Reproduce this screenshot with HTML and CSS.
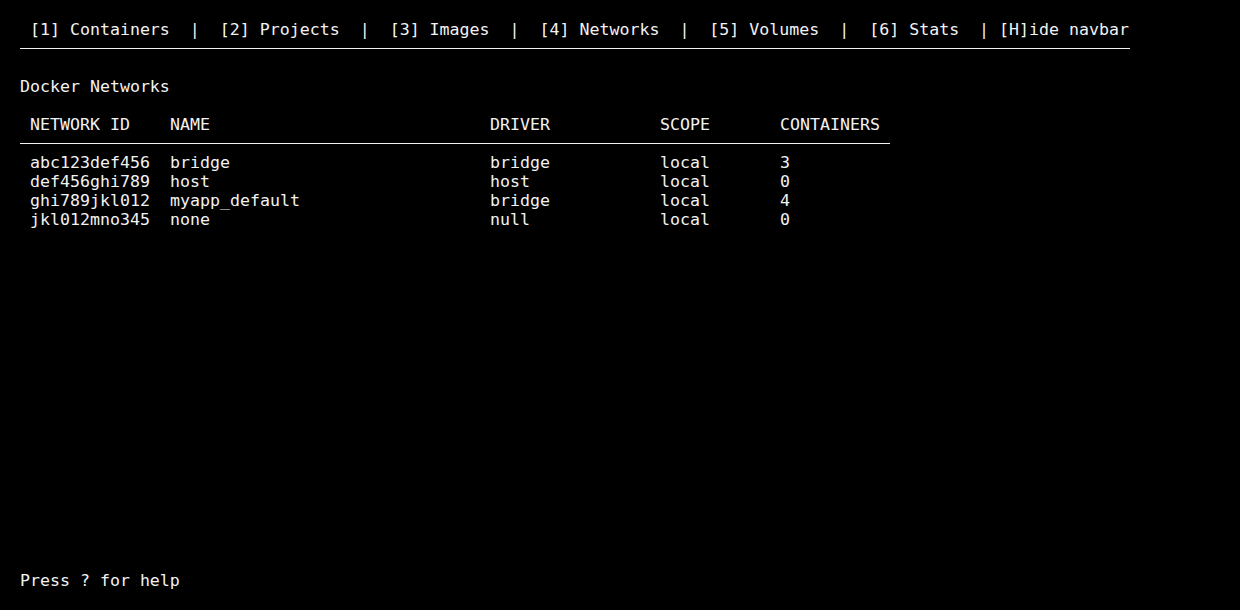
FILE: index.html
```html
<!DOCTYPE html>
<html>
<head>
<meta charset="utf-8">
<link rel="stylesheet" href="styles.css">
</head>
<body>
<div class="screen">
  <main class="main">
    <nav class="navbar"><span class="tab"> [1] Containers</span><span class="sep">  |  </span><span class="tab">[2] Projects</span><span class="sep">  |  </span><span class="tab">[3] Images</span><span class="sep">  |  </span><span class="tab">[4] Networks</span><span class="sep">  |  </span><span class="tab">[5] Volumes</span><span class="sep">  |  </span><span class="tab">[6] Stats</span><span class="sep">  | </span><span class="tab">[H]ide navbar</span></nav>
    <div class="rule rule-nav"></div>
    <h1 class="title">Docker Networks</h1>
    <div class="table">
      <div class="row head">
        <span>NETWORK ID</span><span>NAME</span><span>DRIVER</span><span>SCOPE</span><span>CONTAINERS</span>
      </div>
      <div class="rule rule-table"></div>
      <div class="row">
        <span>abc123def456</span><span>bridge</span><span>bridge</span><span>local</span><span>3</span>
      </div>
      <div class="row">
        <span>def456ghi789</span><span>host</span><span>host</span><span>local</span><span>0</span>
      </div>
      <div class="row">
        <span>ghi789jkl012</span><span>myapp_default</span><span>bridge</span><span>local</span><span>4</span>
      </div>
      <div class="row">
        <span>jkl012mno345</span><span>none</span><span>null</span><span>local</span><span>0</span>
      </div>
    </div>
  </main>
  <footer class="footer">Press ? for help</footer>
</div>
</body>
</html>
```
FILE: styles.css
```css
html, body {
  margin: 0;
  padding: 0;
  background: #000;
}

body {
  color: #f2f2f2;
  font-family: "DejaVu Sans Mono", "Liberation Mono", monospace;
  font-size: 16.6px;
  line-height: 19px;
}

.screen {
  display: flex;
  flex-direction: column;
  height: 610px;
  padding-left: 20px;
  box-sizing: border-box;
  overflow: hidden;
}

.main {
  flex: 1;
  padding-top: 20px;
}

.navbar {
  display: flex;
  height: 19px;
  white-space: pre;
}

.tab, .sep {
  white-space: pre;
}

.rule {
  height: 19px;
  position: relative;
}

.rule::after {
  content: "";
  position: absolute;
  left: 0;
  right: 0;
  top: 9px;
  height: 1px;
  background: #f2f2f2;
}

.rule-nav {
  width: 1110px;
}

.rule-table {
  width: 870px;
}

.title {
  margin: 19px 0;
  font-size: inherit;
  font-weight: normal;
  height: 19px;
}

.table {
  display: flex;
  flex-direction: column;
}

.row {
  display: grid;
  grid-template-columns: 140px 320px 170px 120px 110px;
  padding-left: 10px;
  height: 19px;
  white-space: pre;
}

.footer {
  height: 19px;
  margin-bottom: 20px;
}
```
